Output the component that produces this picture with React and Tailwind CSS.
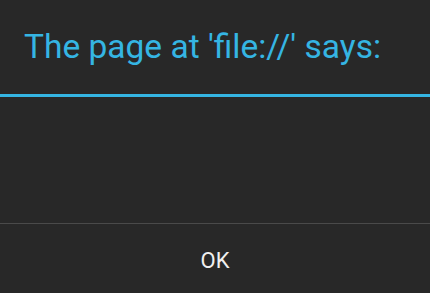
export default function App() {
  return (
    <div className="w-[430px] h-[293px] bg-[#282828] flex flex-col" style={{ fontFamily: "Roboto, 'Noto Sans', sans-serif" }}>
      <div className="h-[94px] flex items-center pl-[24px]">
        <span className="text-[33.5px] text-[#35b5e3] leading-none">The page at 'file://' says:</span>
      </div>
      <div className="h-[3px] bg-[#35b5e3]" />
      <div className="flex-1" />
      <div className="h-px bg-[#4a4a4a]" />
      <div className="h-[69px] flex items-center justify-center pt-[5px]">
        <span className="text-[22px] text-[#f0f0f0] leading-none">OK</span>
      </div>
    </div>
  );
}
